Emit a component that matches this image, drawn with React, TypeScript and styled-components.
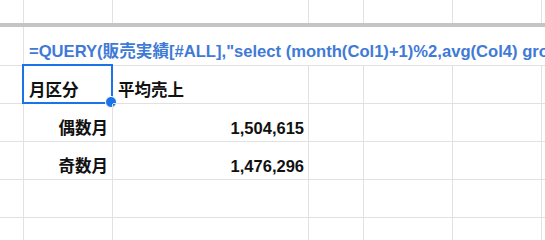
import React, { FC } from "react";
import styled, { createGlobalStyle } from "styled-components";

const GlobalStyle = createGlobalStyle`
  html, body {
    margin: 0;
    padding: 0;
    background: #ffffff;
    overflow: hidden;
  }
`;

const COLS = "24px 89px 196px 55px 89px 89px 1fr";
const LINE = "#e1e1e1";

const Sheet = styled.div`
  width: 545px;
  height: 240px;
  overflow: hidden;
  font-family: "Liberation Sans", "Noto Sans CJK JP", sans-serif;
  font-weight: bold;
  color: #111111;
`;

const Row = styled.div<{ $h: number }>`
  display: grid;
  grid-template-columns: ${COLS};
  height: ${(p) => p.$h}px;
`;

const Cell = styled.div<{ $align?: "left" | "right"; $noBottom?: boolean }>`
  position: relative;
  box-sizing: border-box;
  border-right: 1px solid ${LINE};
  border-bottom: ${(p) => (p.$noBottom ? "none" : `1px solid ${LINE}`)};
  display: flex;
  align-items: flex-end;
  justify-content: ${(p) => (p.$align === "right" ? "flex-end" : "flex-start")};
  padding: 0 4px 3px 5px;
  font-size: 16.5px;
  line-height: 19px;
  white-space: nowrap;
`;

const FreezeBar = styled.div`
  height: 4px;
  background: #c4c4c4;
`;

const FormulaRow = styled.div`
  display: grid;
  grid-template-columns: 24px 1fr;
  height: 39px;
`;

const FormulaCell = styled.div`
  box-sizing: border-box;
  border-bottom: 1px solid ${LINE};
  padding: 0 0 3px 5px;
  display: flex;
  align-items: flex-end;
  overflow: hidden;
  white-space: nowrap;
  color: #3f7ad6;
  font-size: 16.6px;
  line-height: 20px;
`;

const Selection = styled.div`
  position: absolute;
  left: -2px;
  top: -2px;
  right: -1px;
  bottom: -1px;
  border: 2px solid #1a73e8;
  pointer-events: none;
`;

const Handle = styled.div`
  position: absolute;
  right: -6px;
  bottom: -6px;
  width: 10px;
  height: 10px;
  border-radius: 50%;
  background: #1a73e8;
  border: 1px solid #ffffff;
`;

const BlankCells: FC<{ count: number; noBottom?: boolean }> = ({ count, noBottom }) => (
  <>
    {Array.from({ length: count }).map((_, i) => (
      <Cell key={i} $noBottom={noBottom} />
    ))}
  </>
);

const rows = [
  { label: "偶数月", value: "1,504,615" },
  { label: "奇数月", value: "1,476,296" },
];

const App: FC = () => (
  <Sheet>
    <GlobalStyle />
    <Row $h={23}>
      <BlankCells count={7} noBottom />
    </Row>
    <FreezeBar />
    <FormulaRow>
      <Cell />
      <FormulaCell>=QUERY(販売実績[#ALL],"select (month(Col1)+1)%2,avg(Col4) group by (month(Col1)+1)%2 label (month(Col1)+1)%2 '月区分', avg(Col4) '平均売上'",1)</FormulaCell>
    </FormulaRow>
    <Row $h={38}>
      <Cell />
      <Cell>
        月区分
        <Selection>
          <Handle />
        </Selection>
      </Cell>
      <Cell>平均売上</Cell>
      <BlankCells count={4} />
    </Row>
    {rows.map((r) => (
      <Row $h={38} key={r.label}>
        <Cell />
        <Cell $align="right">{r.label}</Cell>
        <Cell $align="right">{r.value}</Cell>
        <BlankCells count={4} />
      </Row>
    ))}
    <Row $h={38}>
      <BlankCells count={7} />
    </Row>
    <Row $h={38}>
      <BlankCells count={7} />
    </Row>
  </Sheet>
);

export default App;
